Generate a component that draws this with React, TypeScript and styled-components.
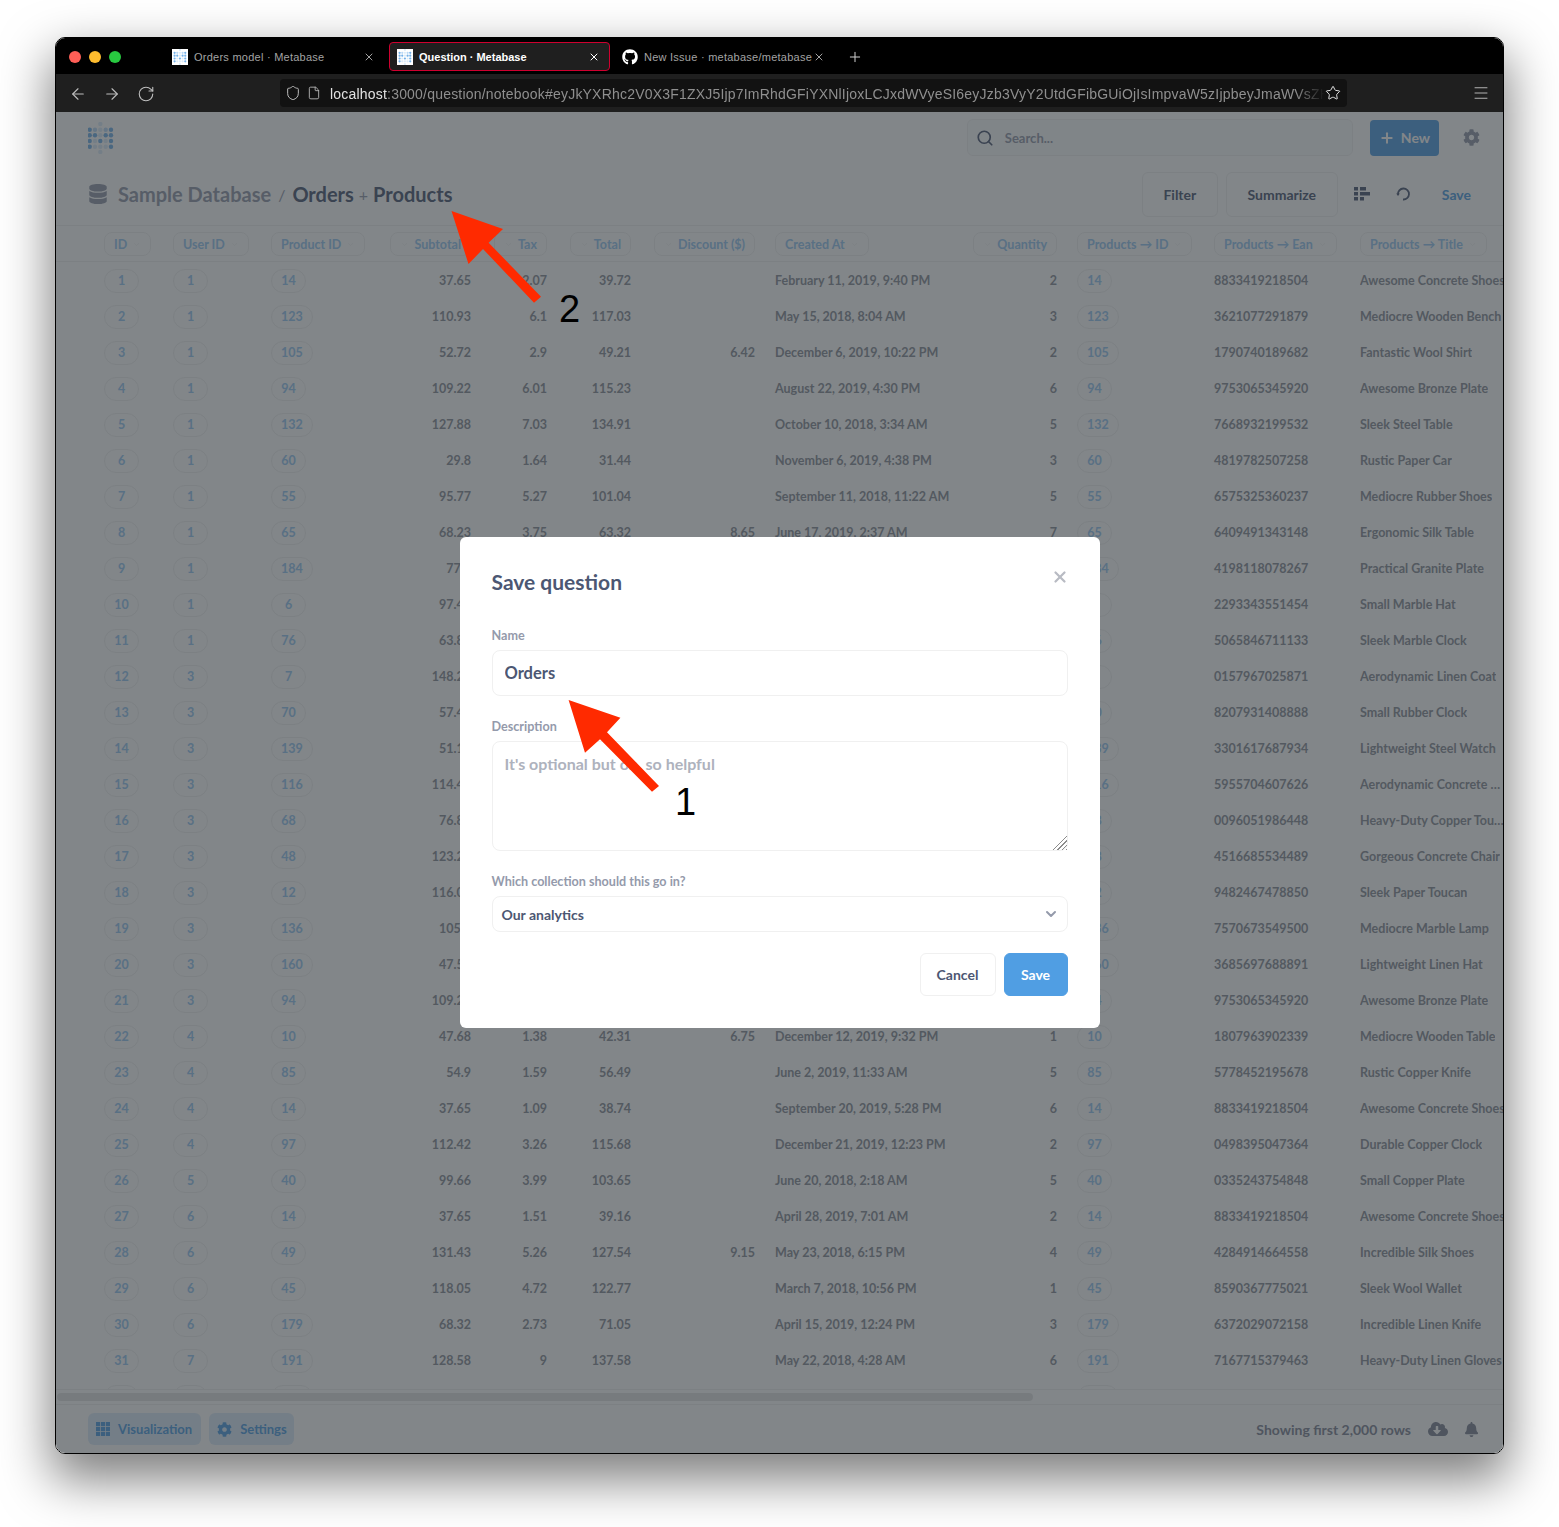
import React from 'react';
import styled, { createGlobalStyle } from 'styled-components';
import {
  ArrowLeft,
  ArrowRight,
  ChevronDown,
  File,
  Menu,
  Plus,
  RotateCw,
  Search,
  Shield,
  Star,
  X,
} from 'lucide-react';
import { FaBell, FaCloudDownloadAlt, FaCog, FaDatabase, FaGithub } from 'react-icons/fa';

const brand = '#509ee3';
const tableLink = '#98c8f2';
const dark = '#4c5773';
const medium = '#949aab';
const cellText = '#8b8f99';
const border = '#f0f0f0';
const columns = '69px 98px 110px 90px 76px 84px 124px 200px 102px 157px 146px 146px';

const GlobalStyle = createGlobalStyle`
  html, body {
    margin: 0;
    background: #fff;
  }
  * {
    box-sizing: border-box;
  }
`;

const Page = styled.div`
  position: relative;
  width: 1559px;
  height: 1527px;
  padding: 37px 0 0 55px;
  overflow: hidden;
  background: #fff;
  font-family: Lato, 'Noto Sans', sans-serif;
`;

const BrowserWindow = styled.div`
  display: flex;
  flex-direction: column;
  width: 1449px;
  height: 1417px;
  border: 1px solid #000;
  border-radius: 10px;
  overflow: hidden;
  box-shadow: 0 22px 50px 4px rgba(0, 0, 0, 0.5);
`;

const TabBar = styled.div`
  display: flex;
  align-items: center;
  flex: 0 0 36px;
  padding: 1px 0 0 13px;
  background: #000;
`;

const Lights = styled.div`
  display: flex;
  gap: 8px;
  margin-right: 43px;
`;

const Light = styled.span<{ $color: string }>`
  width: 12px;
  height: 12px;
  border-radius: 50%;
  background: ${(p) => p.$color};
`;

const Tab = styled.div<{ $active?: boolean }>`
  display: flex;
  align-items: center;
  gap: 6px;
  width: 221px;
  height: 29px;
  margin-right: 4px;
  padding: 0 9px 0 7px;
  border: 1px solid ${(p) => (p.$active ? '#d0002f' : 'transparent')};
  border-radius: 4px;
  background: ${(p) => (p.$active ? '#1f1f1f' : 'transparent')};
  color: ${(p) => (p.$active ? '#fff' : '#a3a3a3')};
  font-family: 'Liberation Sans', sans-serif;
  font-size: 11px;
  font-weight: ${(p) => (p.$active ? 700 : 400)};
  letter-spacing: ${(p) => (p.$active ? 0 : 0.25)}px;
  svg {
    flex: none;
  }
`;

const TabTitle = styled.span`
  flex: 1;
  min-width: 0;
  white-space: nowrap;
`;

const NewTab = styled.span`
  display: flex;
  margin-left: 8px;
  color: #d0d0d0;
`;

const Favicon = styled.svg`
  flex: none;
  width: 16px;
  height: 16px;
  background: #fff;
`;

const Toolbar = styled.div`
  display: flex;
  align-items: center;
  flex: 0 0 38px;
  padding: 0 13px;
  background: #1f1f1f;
  color: #bdbdbd;
`;

const NavButtons = styled.div`
  display: flex;
  gap: 16px;
  margin-right: 125px;
  padding-top: 1px;
`;

const UrlBar = styled.div`
  display: flex;
  align-items: center;
  width: 1067px;
  height: 28px;
  padding: 0 6px 0 5px;
  border-radius: 4px;
  background: #121212;
`;

const UrlIcons = styled.div`
  display: flex;
  align-items: center;
  gap: 6px;
  flex: none;
  margin-right: 9px;
`;

const UrlText = styled.div`
  flex: 1;
  padding-top: 1px;
  overflow: hidden;
  color: #8f8f8f;
  font-family: 'Liberation Sans', sans-serif;
  font-size: 14px;
  letter-spacing: 0.2px;
  white-space: nowrap;
  mask-image: linear-gradient(90deg, #000 97%, transparent 100%);
  b {
    color: #e2e2e2;
    font-weight: 400;
  }
`;

const MenuSlot = styled.div`
  display: flex;
  margin-left: auto;
`;

const Content = styled.div`
  position: relative;
  display: flex;
  flex-direction: column;
  flex: 1;
  min-height: 0;
  background: #fff;
`;

const AppBar = styled.div`
  display: flex;
  align-items: center;
  flex: 0 0 53px;
  padding: 0 23px 2px 32px;
`;

const Logo = styled.svg`
  width: 26px;
  height: 32px;
`;

const SearchBox = styled.div`
  display: flex;
  align-items: center;
  gap: 11px;
  width: 386px;
  height: 37px;
  margin-left: auto;
  padding-left: 8px;
  border: 1px solid ${border};
  border-radius: 6px;
  background: #fbfcfd;
  color: ${dark};
  span {
    color: ${medium};
    font-size: 13px;
    font-weight: 700;
  }
`;

const NewButton = styled.div`
  display: flex;
  align-items: center;
  gap: 6px;
  height: 36px;
  margin: 0 24px 0 17px;
  padding: 0 9px;
  border-radius: 4px;
  background: ${brand};
  color: #fff;
  font-size: 14px;
  font-weight: 700;
`;

const QueryBar = styled.div`
  display: flex;
  align-items: center;
  flex: 0 0 61px;
  padding: 0 32px 2px 32px;
  border-bottom: 1px solid ${border};
  color: ${dark};
`;

const Crumbs = styled.div`
  display: flex;
  align-items: center;
  flex: 1;
  font-size: 20px;
  font-weight: 700;
`;

const CrumbMuted = styled.span<{ $gap?: number }>`
  margin: 0 ${(p) => p.$gap ?? 0}px;
  color: ${medium};
  font-weight: ${(p) => (p.$gap ? 400 : 700)};
  font-size: ${(p) => (p.$gap ? 16 : 20)}px;
`;

const DatabaseIcon = styled(FaDatabase)`
  margin-right: 10px;
  color: ${medium};
  font-size: 20px;
`;

const OutlineButton = styled.div<{ $width: number }>`
  display: flex;
  align-items: center;
  justify-content: center;
  width: ${(p) => p.$width}px;
  height: 45px;
  margin-right: 8px;
  border: 1px solid ${border};
  border-radius: 6px;
  font-size: 14px;
  font-weight: 700;
`;

const IconSlot = styled.div<{ $left: number }>`
  display: flex;
  margin-left: ${(p) => p.$left}px;
`;

const LinkText = styled.span`
  margin-left: 31px;
  color: ${brand};
  font-size: 14px;
  font-weight: 700;
`;

const Table = styled.div`
  flex: 0 0 1163px;
  overflow: hidden;
  font-size: 12.5px;
  font-weight: 700;
`;

const HeadRow = styled.div`
  display: grid;
  grid-template-columns: ${columns};
  height: 36px;
  margin-bottom: 1px;
  padding: 6px 0 0 48px;
  border-bottom: 1px solid ${border};
`;

const Row = styled.div`
  display: grid;
  grid-template-columns: ${columns};
  align-items: center;
  height: 36px;
  padding-left: 48px;
  color: ${cellText};
  line-height: 16px;
`;

const Cell = styled.div<{ $align?: 'left' | 'right'; $pad?: number }>`
  display: flex;
  justify-content: ${(p) => (p.$align === 'right' ? 'flex-end' : 'flex-start')};
  min-width: 0;
  padding-left: ${(p) => p.$pad ?? 0}px;
`;

const TitleText = styled.span`
  overflow: hidden;
  white-space: nowrap;
  text-overflow: ellipsis;
`;

const HeadPill = styled.div<{ $reverse?: boolean }>`
  display: flex;
  flex-direction: ${(p) => (p.$reverse ? 'row-reverse' : 'row')};
  align-items: center;
  gap: 5px;
  height: 24px;
  padding: 0 9px;
  border: 1px solid ${border};
  border-radius: 8px;
  color: ${tableLink};
  white-space: nowrap;
  svg {
    color: ${border};
  }
`;

const LinkPill = styled.div`
  min-width: 35px;
  height: 24px;
  padding: 0 9px;
  border: 1px solid ${border};
  border-radius: 12px;
  color: ${tableLink};
  line-height: 22px;
  text-align: center;
`;

const ScrollTrack = styled.div`
  flex: 0 0 16px;
  padding: 3px 1px;
  border-top: 1px solid ${border};
  border-bottom: 1px solid ${border};
`;

const ScrollThumb = styled.div`
  width: 976px;
  height: 8px;
  border-radius: 4px;
  background: #e4e4e4;
`;

const Footer = styled.div`
  display: flex;
  align-items: center;
  gap: 8px;
  flex: 1;
  padding: 0 24px 0 32px;
  color: #7f8596;
`;

const FooterButton = styled.div<{ $end: number }>`
  display: flex;
  align-items: center;
  gap: 8px;
  height: 32px;
  padding: 0 ${(p) => p.$end}px 0 8px;
  border-radius: 6px;
  background: #ddecfa;
  color: ${brand};
  font-size: 13px;
  font-weight: 700;
`;

const RowCount = styled.span`
  margin-left: auto;
  margin-right: 9px;
  font-size: 14px;
  font-weight: 700;
`;

const Overlay = styled.div`
  position: absolute;
  inset: 0;
  display: flex;
  align-items: center;
  justify-content: center;
  background: rgba(46, 53, 59, 0.6);
`;

const Modal = styled.div`
  width: 640px;
  height: 491px;
  padding: 32px;
  border-radius: 6px;
  background: #fff;
  color: ${dark};
`;

const ModalHead = styled.div`
  display: flex;
  justify-content: space-between;
  height: 28px;
  margin-bottom: 30px;
  color: #b8bbc3;
  svg {
    margin: -1px -1px 0 0;
  }
`;

const ModalTitle = styled.h2`
  margin: 0;
  color: ${dark};
  font-size: 21px;
  font-weight: 700;
  line-height: 26px;
`;

const Field = styled.div`
  margin-bottom: 22px;
`;

const Label = styled.label`
  display: block;
  height: 16px;
  margin: 0 0 7px;
  color: ${medium};
  font-size: 12.6px;
  font-weight: 700;
  line-height: 18px;
`;

const TextInput = styled.input`
  display: block;
  width: 100%;
  height: 46px;
  padding: 0 12px;
  border: 1px solid ${border};
  border-radius: 8px;
  outline: none;
  color: ${dark};
  font-family: inherit;
  font-size: 16.5px;
  font-weight: 700;
`;

const TextArea = styled.textarea`
  display: block;
  width: 100%;
  height: 110px;
  padding: 12px;
  border: 1px solid ${border};
  border-radius: 8px;
  outline: none;
  font-family: inherit;
  font-size: 16px;
  font-weight: 700;
  &::placeholder {
    color: #aeb2bd;
    opacity: 1;
  }
  &::-webkit-resizer {
    background:
      linear-gradient(135deg, #fff 50%, transparent 50%),
      repeating-linear-gradient(135deg, transparent 0 2px, #8c8c8c 2px 3px);
  }
`;

const SelectBox = styled.div`
  display: flex;
  align-items: center;
  justify-content: space-between;
  height: 36px;
  padding: 0 8px 0 9px;
  border: 1px solid ${border};
  border-radius: 8px;
  font-size: 14px;
  font-weight: 700;
  svg {
    color: ${medium};
  }
`;

const ModalActions = styled.div`
  display: flex;
  justify-content: flex-end;
  gap: 8px;
  margin-top: -1px;
`;

const ActionButton = styled.div<{ $primary?: boolean }>`
  display: flex;
  align-items: center;
  justify-content: center;
  width: ${(p) => (p.$primary ? 64 : 76)}px;
  height: 43px;
  border: 1px solid ${(p) => (p.$primary ? brand : border)};
  border-radius: 6px;
  background: ${(p) => (p.$primary ? brand : '#fff')};
  color: ${(p) => (p.$primary ? '#fff' : dark)};
  font-size: 14px;
  font-weight: 700;
`;

const Annotations = styled.svg`
  position: absolute;
  top: 0;
  left: 0;
  width: 1559px;
  height: 1527px;
  pointer-events: none;
`;

const Callout = styled.div<{ $left: number; $top: number }>`
  position: absolute;
  left: ${(p) => p.$left}px;
  top: ${(p) => p.$top}px;
  color: #000;
  font-family: 'Liberation Sans', sans-serif;
  font-size: 38px;
  line-height: 38px;
`;

// id|user|product|subtotal|tax|total|discount|created|qty|ean|title
const ROWS = `1|1|14|37.65|2.07|39.72||February 11, 2019, 9:40 PM|2|8833419218504|Awesome Concrete Shoes
2|1|123|110.93|6.1|117.03||May 15, 2018, 8:04 AM|3|3621077291879|Mediocre Wooden Bench
3|1|105|52.72|2.9|49.21|6.42|December 6, 2019, 10:22 PM|2|1790740189682|Fantastic Wool Shirt
4|1|94|109.22|6.01|115.23||August 22, 2019, 4:30 PM|6|9753065345920|Awesome Bronze Plate
5|1|132|127.88|7.03|134.91||October 10, 2018, 3:34 AM|5|7668932199532|Sleek Steel Table
6|1|60|29.8|1.64|31.44||November 6, 2019, 4:38 PM|3|4819782507258|Rustic Paper Car
7|1|55|95.77|5.27|101.04||September 11, 2018, 11:22 AM|5|6575325360237|Mediocre Rubber Shoes
8|1|65|68.23|3.75|63.32|8.65|June 17, 2019, 2:37 AM|7|6409491343148|Ergonomic Silk Table
9|1|184|77.4|4.26|81.66||May 3, 2019, 1:12 PM|4|4198118078267|Practical Granite Plate
10|1|6|97.44|5.36|102.8||April 7, 2019, 8:20 AM|2|2293343551454|Small Marble Hat
11|1|76|63.82|3.51|67.33||March 2, 2018, 6:45 PM|3|5065846711133|Sleek Marble Clock
12|3|7|148.23|8.15|156.38||July 9, 2019, 9:02 AM|1|0157967025871|Aerodynamic Linen Coat
13|3|70|57.48|3.16|60.64||June 1, 2018, 3:30 PM|5|8207931408888|Small Rubber Clock
14|3|139|51.12|2.81|53.93||May 26, 2019, 7:55 AM|2|3301617687934|Lightweight Steel Watch
15|3|116|114.42|6.29|120.71||January 8, 2019, 4:10 PM|6|5955704607626|Aerodynamic Concrete Lamp
16|3|68|76.83|4.23|81.06||August 4, 2018, 11:41 AM|3|0096051986448|Heavy-Duty Copper Toucan
17|3|48|123.21|6.78|129.99||March 19, 2019, 2:25 PM|4|4516685534489|Gorgeous Concrete Chair
18|3|12|116.03|6.38|122.41||October 2, 2018, 5:16 AM|2|9482467478850|Sleek Paper Toucan
19|3|136|105.4|5.8|111.2||April 30, 2019, 10:08 PM|5|7570673549500|Mediocre Marble Lamp
20|3|160|47.55|2.62|50.17||February 13, 2018, 9:37 AM|1|3685697688891|Lightweight Linen Hat
21|3|94|109.22|6.01|115.23||November 21, 2019, 6:04 PM|3|9753065345920|Awesome Bronze Plate
22|4|10|47.68|1.38|42.31|6.75|December 12, 2019, 9:32 PM|1|1807963902339|Mediocre Wooden Table
23|4|85|54.9|1.59|56.49||June 2, 2019, 11:33 AM|5|5778452195678|Rustic Copper Knife
24|4|14|37.65|1.09|38.74||September 20, 2019, 5:28 PM|6|8833419218504|Awesome Concrete Shoes
25|4|97|112.42|3.26|115.68||December 21, 2019, 12:23 PM|2|0498395047364|Durable Copper Clock
26|5|40|99.66|3.99|103.65||June 20, 2018, 2:18 AM|5|0335243754848|Small Copper Plate
27|6|14|37.65|1.51|39.16||April 28, 2019, 7:01 AM|2|8833419218504|Awesome Concrete Shoes
28|6|49|131.43|5.26|127.54|9.15|May 23, 2018, 6:15 PM|4|4284914664558|Incredible Silk Shoes
29|6|45|118.05|4.72|122.77||March 7, 2018, 10:56 PM|1|8590367775021|Sleek Wool Wallet
30|6|179|68.32|2.73|71.05||April 15, 2019, 12:24 PM|3|6372029072158|Incredible Linen Knife
31|7|191|128.58|9|137.58||May 22, 2018, 4:28 AM|6|7167715379463|Heavy-Duty Linen Gloves
32|7|103|70.85|4.25|75.1||June 9, 2019, 1:20 PM|2|1234567890123|Small Linen Hat`
  .split('\n')
  .map((line) => line.split('|'));

const HEADERS: { label: string; right?: boolean; pad?: number }[] = [
  { label: 'ID' },
  { label: 'User ID' },
  { label: 'Product ID' },
  { label: 'Subtotal', right: true },
  { label: 'Tax', right: true },
  { label: 'Total', right: true },
  { label: 'Discount ($)', right: true },
  { label: 'Created At', pad: 20 },
  { label: 'Quantity', right: true },
  { label: 'Products → ID', pad: 20 },
  { label: 'Products → Ean' },
  { label: 'Products → Title' },
];

// dots of the Metabase mark: x, y, strength
const LOGO_DOTS: [number, number, number][] = [
  [100.3, 122, 0.2], [100.3, 150, 0.2],
  [89.7, 127.7, 0.8], [95, 127.7, 0.4], [100.3, 127.7, 0.2], [105.7, 127.7, 0.4], [111, 127.7, 0.8],
  [89.7, 133.3, 0.8], [95, 133.3, 0.8], [100.3, 133.3, 0.2], [105.7, 133.3, 0.8], [111, 133.3, 0.8],
  [89.7, 139, 0.8], [95, 139, 0.2], [100.3, 139, 0.8], [105.7, 139, 0.2], [111, 139, 0.8],
  [89.7, 144.7, 0.8], [95, 144.7, 0.2], [100.3, 144.7, 0.2], [105.7, 144.7, 0.2], [111, 144.7, 0.8],
];

const MetabaseDots = () => (
  <>
    {LOGO_DOTS.map(([x, y, o]) => (
      <circle key={`${x}_${y}`} cx={x - 88} cy={y - 120} r={2.2} fill={brand} opacity={o} />
    ))}
  </>
);

const TabFavicon = () => (
  <Favicon viewBox="0 0 25 32">
    <MetabaseDots />
  </Favicon>
);

const ListIcon = () => (
  <svg width="16" height="14" viewBox="0 0 16 14" fill={dark}>
    <rect x="0" y="0" width="4" height="3.5" />
    <rect x="6" y="0" width="6" height="3.5" />
    <rect x="0" y="5" width="4" height="3.5" />
    <rect x="6" y="5" width="10" height="3.5" />
    <rect x="0" y="10" width="4" height="3.5" />
    <rect x="6" y="10" width="4" height="3.5" />
  </svg>
);

const RefreshIcon = () => (
  <svg width="16" height="16" viewBox="0 0 16 16" fill="none" stroke={dark} strokeWidth="1.8">
    <path d="M3 8.5A5.5 5.5 0 1 1 8 13.5" />
    <path d="M1.2 7.5h3.6L3 10z" fill={dark} stroke="none" />
  </svg>
);

const GridIcon = () => (
  <svg width="14" height="14" viewBox="0 0 14 14" fill={brand}>
    {[0, 5, 10].map((y) =>
      [0, 5, 10].map((x) => <rect key={`${x}_${y}`} x={x} y={y} width="4.2" height="4.2" />),
    )}
  </svg>
);

const URL =
  ':3000/question/notebook#eyJkYXRhc2V0X3F1ZXJ5Ijp7ImRhdGFiYXNlIjoxLCJxdWVyeSI6eyJzb3VyY2UtdGFibGUiOjIsImpvaW5zIjpbeyJmaWVsZHMiOiJhbGwifV19fQ';

const App = () => (
  <Page>
    <GlobalStyle />
    <BrowserWindow>
      <TabBar>
        <Lights>
          <Light $color="#ff5f57" />
          <Light $color="#febc2e" />
          <Light $color="#28c840" />
        </Lights>
        <Tab>
          <TabFavicon />
          <TabTitle>Orders model · Metabase</TabTitle>
          <X size={12} />
        </Tab>
        <Tab $active>
          <TabFavicon />
          <TabTitle>Question · Metabase</TabTitle>
          <X size={12} />
        </Tab>
        <Tab>
          <FaGithub size={16} color="#fff" />
          <TabTitle>New Issue · metabase/metabase</TabTitle>
          <X size={12} />
        </Tab>
        <NewTab>
          <Plus size={16} strokeWidth={1.5} />
        </NewTab>
      </TabBar>

      <Toolbar>
        <NavButtons>
          <ArrowLeft size={18} strokeWidth={1.5} />
          <ArrowRight size={18} strokeWidth={1.5} />
          <RotateCw size={18} strokeWidth={1.5} />
        </NavButtons>
        <UrlBar>
          <UrlIcons>
            <Shield size={16} strokeWidth={1.5} />
            <File size={14} strokeWidth={1.5} />
          </UrlIcons>
          <UrlText>
            <b>localhost</b>
            {URL}
          </UrlText>
          <Star size={16} strokeWidth={1.5} color="#e2e2e2" />
        </UrlBar>
        <MenuSlot>
          <Menu size={18} strokeWidth={1.25} />
        </MenuSlot>
      </Toolbar>

      <Content>
        <AppBar>
          <Logo viewBox="0 0 26 32">
            <MetabaseDots />
          </Logo>
          <SearchBox>
            <Search size={18} strokeWidth={2.25} />
            <span>Search...</span>
          </SearchBox>
          <NewButton>
            <Plus size={16} strokeWidth={3} />
            New
          </NewButton>
          <FaCog size={17} color={medium} />
        </AppBar>

        <QueryBar>
          <Crumbs>
            <DatabaseIcon />
            <CrumbMuted>Sample Database</CrumbMuted>
            <CrumbMuted $gap={7}>/</CrumbMuted>
            Orders
            <CrumbMuted $gap={5}>+</CrumbMuted>
            Products
          </Crumbs>
          <OutlineButton $width={76}>Filter</OutlineButton>
          <OutlineButton $width={112}>Summarize</OutlineButton>
          <IconSlot $left={8}>
            <ListIcon />
          </IconSlot>
          <IconSlot $left={25}>
            <RefreshIcon />
          </IconSlot>
          <LinkText>Save</LinkText>
        </QueryBar>

        <Table>
          <HeadRow>
            {HEADERS.map((h) => (
              <Cell key={h.label} $align={h.right ? 'right' : 'left'} $pad={h.pad}>
                <HeadPill $reverse={h.right}>
                  {h.label}
                  <ChevronDown size={9} strokeWidth={2} />
                </HeadPill>
              </Cell>
            ))}
          </HeadRow>
          {ROWS.map(([id, user, product, subtotal, tax, total, discount, created, qty, ean, title]) => (
            <Row key={id}>
              <Cell>
                <LinkPill>{id}</LinkPill>
              </Cell>
              <Cell>
                <LinkPill>{user}</LinkPill>
              </Cell>
              <Cell>
                <LinkPill>{product}</LinkPill>
              </Cell>
              <Cell $align="right">{subtotal}</Cell>
              <Cell $align="right">{tax}</Cell>
              <Cell $align="right">{total}</Cell>
              <Cell $align="right">{discount}</Cell>
              <Cell $pad={20}>{created}</Cell>
              <Cell $align="right">{qty}</Cell>
              <Cell $pad={20}>
                <LinkPill>{product}</LinkPill>
              </Cell>
              <Cell>{ean}</Cell>
              <Cell>
                <TitleText>{title}</TitleText>
              </Cell>
            </Row>
          ))}
        </Table>

        <ScrollTrack>
          <ScrollThumb />
        </ScrollTrack>

        <Footer>
          <FooterButton $end={9}>
            <GridIcon />
            Visualization
          </FooterButton>
          <FooterButton $end={7}>
            <FaCog size={15} />
            Settings
          </FooterButton>
          <RowCount>Showing first 2,000 rows</RowCount>
          <FaCloudDownloadAlt size={20} />
          <IconSlot $left={8}>
            <FaBell size={15} />
          </IconSlot>
        </Footer>

        <Overlay>
          <Modal>
            <ModalHead>
              <ModalTitle>Save question</ModalTitle>
              <X size={18} strokeWidth={3} />
            </ModalHead>
            <Field>
              <Label>Name</Label>
              <TextInput defaultValue="Orders" readOnly />
            </Field>
            <Field>
              <Label>Description</Label>
              <TextArea placeholder="It's optional but oh, so helpful" readOnly />
            </Field>
            <Field>
              <Label>Which collection should this go in?</Label>
              <SelectBox>
                Our analytics
                <ChevronDown size={16} strokeWidth={3} />
              </SelectBox>
            </Field>
            <ModalActions>
              <ActionButton>Cancel</ActionButton>
              <ActionButton $primary>Save</ActionButton>
            </ModalActions>
          </Modal>
        </Overlay>
      </Content>
    </BrowserWindow>

    <Annotations viewBox="0 0 1559 1527">
      <polygon
        fill="#ff2a00"
        points="451.5,211 503,229 488.6,242.7 541,296.7 534,302.7 483,249 468.5,264"
      />
      <polygon
        fill="#ff2a00"
        points="568.6,700 620.4,717.7 607,732.3 659,786 652,791.7 600,739.3 585,752.7"
      />
    </Annotations>
    <Callout $left={559} $top={290}>2</Callout>
    <Callout $left={675} $top={783}>1</Callout>
  </Page>
);

export default App;
